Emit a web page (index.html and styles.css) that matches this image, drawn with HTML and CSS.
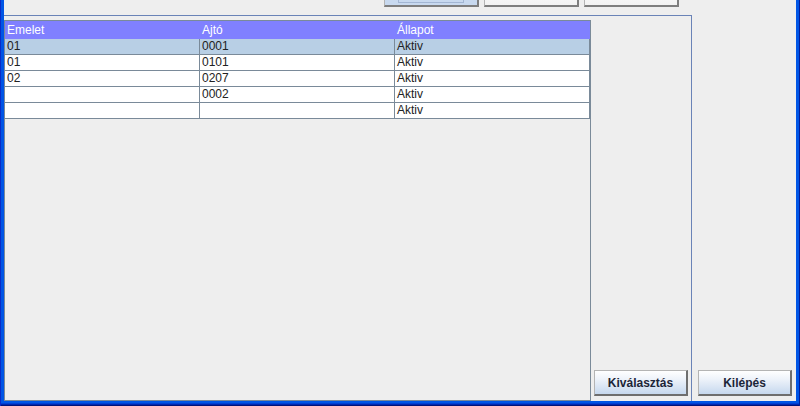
FILE: index.html
```html
<!DOCTYPE html>
<html lang="hu">
<head>
<meta charset="utf-8">
<title>Ajtók</title>
<link rel="stylesheet" href="styles.css">
</head>
<body>
<div class="window">
  <div class="content">
    <div class="topbar">
      <button class="tbtn pressed"><span class="focus"></span></button>
      <button class="tbtn"></button>
      <button class="tbtn"></button>
    </div>
    <div class="body">
      <div class="panel">
        <div class="pane">
          <div class="grid">
            <div class="row head">
              <div class="cell">Emelet</div>
              <div class="cell">Ajtó</div>
              <div class="cell">Állapot</div>
            </div>
            <div class="row selected">
              <div class="cell">01</div>
              <div class="cell">0001</div>
              <div class="cell">Aktiv</div>
            </div>
            <div class="row">
              <div class="cell">01</div>
              <div class="cell">0101</div>
              <div class="cell">Aktiv</div>
            </div>
            <div class="row">
              <div class="cell">02</div>
              <div class="cell">0207</div>
              <div class="cell">Aktiv</div>
            </div>
            <div class="row">
              <div class="cell"></div>
              <div class="cell">0002</div>
              <div class="cell">Aktiv</div>
            </div>
            <div class="row">
              <div class="cell"></div>
              <div class="cell"></div>
              <div class="cell">Aktiv</div>
            </div>
          </div>
        </div>
        <div class="side">
          <button class="btn">Kiválasztás</button>
        </div>
      </div>
      <div class="right">
        <button class="btn">Kilépés</button>
      </div>
    </div>
  </div>
</div>
</body>
</html>
```

FILE: styles.css
```css
* { box-sizing: border-box; }
html, body {
  margin: 0;
  padding: 0;
  width: 800px;
  height: 406px;
  overflow: hidden;
}
body {
  font-family: "Liberation Sans", Arial, sans-serif;
  font-size: 12px;
}
.window {
  width: 800px;
  height: 406px;
  background: #0055e5;
  padding: 0 4px 5px 4px;
  box-shadow:
    inset 1px 0 #0a2bc8,
    inset -1px 0 #001f9c,
    inset 0 -1px #00137a,
    inset 0 -2px #0028b0,
    inset 0 -3px #0040d4;
}
.content {
  width: 792px;
  height: 401px;
  background: #eeeeee;
  display: flex;
  flex-direction: column;
}
.topbar {
  height: 15px;
  flex: none;
  display: flex;
  align-items: flex-end;
  gap: 5px;
  padding: 0 0 8px 380px;
  overflow: hidden;
}
.tbtn {
  flex: none;
  width: 95px;
  height: 24px;
  padding: 0;
  margin: 0;
  border: 1px solid;
  border-color: #b4b4b4 #7e7e7e #7e7e7e #b4b4b4;
  border-right-width: 2px;
  border-bottom-width: 2px;
  background: linear-gradient(#ffffff, #f2f2f2);
  position: relative;
}
.tbtn.pressed {
  background: #c8d9ef;
}
.tbtn .focus {
  position: absolute;
  left: 13px;
  right: 13px;
  top: 2px;
  bottom: 2px;
  border: 1px solid #a3b6d3;
}
.body {
  flex: 1;
  display: flex;
  min-height: 0;
}
.panel {
  width: 688px;
  flex: none;
  border-top: 1px solid #6a83b7;
  border-right: 1px solid #6a83b7;
  padding-top: 4px;
  display: flex;
}
.pane {
  width: 587px;
  flex: none;
  border: 1px solid #7a8a99;
  background: #eeeeee;
}
.grid {
  width: 585px;
}
.row {
  display: grid;
  grid-template-columns: 195px 195px 195px;
  height: 16px;
  background: #ffffff;
  color: #222222;
}
.row .cell {
  border-right: 1px solid #7a8a99;
  border-bottom: 1px solid #7a8a99;
  padding: 0 2px;
  line-height: 15px;
  white-space: nowrap;
  overflow: hidden;
}
.row.head {
  height: 18px;
  background: #8080ff;
  color: #ffffff;
}
.row.head .cell {
  border: none;
  line-height: 18px;
}
.row.selected {
  background: #b8cfe5;
}
.side {
  flex: 1;
  display: flex;
  align-items: flex-end;
  padding: 0 0 5px 3px;
}
.right {
  flex: 1;
  display: flex;
  align-items: flex-end;
  padding: 0 0 5px 6px;
}
.btn {
  width: 94px;
  height: 26px;
  margin: 0;
  padding: 0;
  font-family: "Liberation Sans", Arial, sans-serif;
  font-size: 12px;
  font-weight: bold;
  color: #1c2538;
  border: 1px solid;
  border-color: #b4b4b4 #6e6e6e #6e6e6e #b4b4b4;
  border-right-width: 2px;
  border-bottom-width: 2px;
  background: linear-gradient(#ffffff 0%, #eef3fa 35%, #c6d8ee 100%);
}
```
